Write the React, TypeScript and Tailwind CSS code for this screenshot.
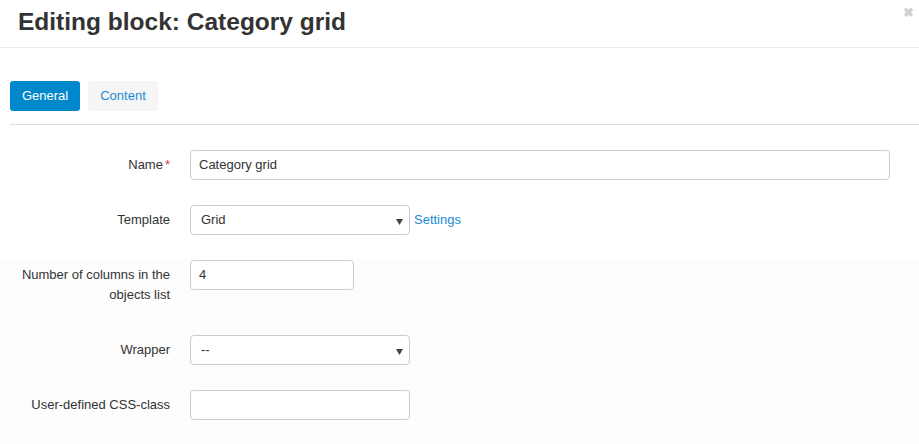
function Caret() {
  return (
    <svg width="7" height="6" viewBox="0 0 7 6" className="absolute right-[6px] top-[13px]">
      <path d="M0 0h7L3.5 6z" fill="#444" />
    </svg>
  );
}

function Row({
  label,
  required,
  children,
  twoLine,
}: {
  label: React.ReactNode;
  required?: boolean;
  children: React.ReactNode;
  twoLine?: boolean;
}) {
  return (
    <div className={`flex ${twoLine ? "pb-[30px]" : "pb-[25px]"}`}>
      <div className="w-[180px] shrink-0 pr-[10px] pl-[20px] pt-[5px] text-right text-[13px] leading-[20px] text-[#333]">
        {label}
        {required && <span className="ml-[2px] text-[#e0383e]">*</span>}
      </div>
      <div className="ml-[10px] flex items-start">{children}</div>
    </div>
  );
}

export default function App() {
  return (
    <div className="relative h-[444px] w-[919px] overflow-hidden bg-white font-['Liberation_Sans',Arial,sans-serif] text-[#333]">
      {/* header */}
      <div className="relative h-[48px] border-b border-[#ebebeb] pl-[18px] pt-[6px]">
        <h1 className="text-[24.5px] font-bold leading-[32px] text-[#333]">
          Editing block: Category grid
        </h1>
        <span className="absolute right-[5px] top-[6px] text-[13px] font-bold leading-none text-[#d0d0d0]">
          ✖
        </span>
      </div>

      {/* tabs */}
      <div className="ml-[10px] mt-[33px] flex gap-[8px] border-b border-[#dddddd] pb-[13px]">
        <button className="h-[30px] w-[70px] rounded-[3px] bg-[#0088cc] text-[13px] text-white">
          General
        </button>
        <button className="h-[30px] w-[70px] rounded-[3px] bg-[#f5f5f5] text-[13px] text-[#1a8ad4]">
          Content
        </button>
      </div>

      {/* form */}
      <div className="pt-[25px]">
        <Row label="Name" required>
          <div className="flex h-[30px] w-[700px] items-center rounded-[4px] border border-[#cccccc] bg-white px-[8px] text-[13px] text-[#333]">
            Category grid
          </div>
        </Row>
        <Row label="Template">
          <div className="relative flex h-[30px] w-[220px] items-center rounded-[4px] border border-[#cccccc] bg-white px-[10px] text-[13px] text-[#333]">
            Grid
            <Caret />
          </div>
          <a className="ml-[4px] mt-[5px] text-[13px] text-[#1a8ad4]">Settings</a>
        </Row>
        <div className="bg-[#fdfdfd]">
          <Row label={<>Number of columns in the<br />objects list</>} twoLine>
            <div className="flex h-[30px] w-[164px] items-center rounded-[4px] border border-[#cccccc] bg-white px-[8px] text-[13px] text-[#333]">
              4
            </div>
          </Row>
          <Row label="Wrapper">
            <div className="relative flex h-[30px] w-[220px] items-center rounded-[4px] border border-[#cccccc] bg-white px-[10px] text-[13px] text-[#333]">
              --
              <Caret />
            </div>
          </Row>
          <Row label="User-defined CSS-class">
            <div className="h-[30px] w-[220px] rounded-[4px] border border-[#cccccc] bg-white" />
          </Row>
        </div>
      </div>
    </div>
  );
}
